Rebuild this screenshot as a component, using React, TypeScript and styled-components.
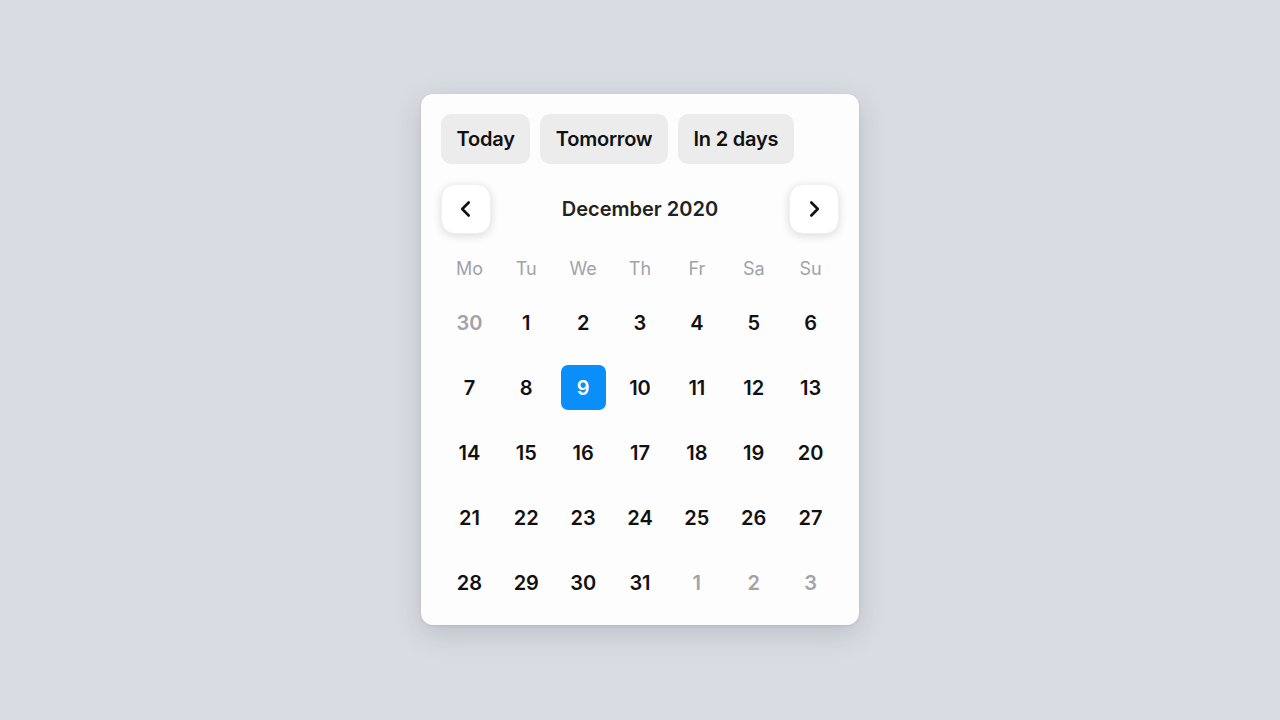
import React from "react";
import styled, { createGlobalStyle } from "styled-components";

const GlobalStyle = createGlobalStyle`
  html, body {
    margin: 0;
    padding: 0;
    background: #d9dce2;
    font-family: Inter, "Noto Sans", sans-serif;
  }
  * { box-sizing: border-box; }
`;

const Page = styled.div`
  width: 1280px;
  height: 720px;
  display: flex;
  justify-content: center;
  align-items: flex-start;
  padding-top: 94px;
`;

const Card = styled.div`
  width: 438px;
  background: #fdfdfd;
  border-radius: 12px;
  padding: 20px;
  box-shadow: 0 8px 28px rgba(60, 66, 80, 0.18), 0 1px 3px rgba(60, 66, 80, 0.12);
  display: flex;
  flex-direction: column;
`;

const Presets = styled.div`
  display: flex;
  gap: 10px;
`;

const PresetButton = styled.button`
  height: 50px;
  padding: 0 15.5px;
  border: none;
  border-radius: 10px;
  background: #ececed;
  color: #111;
  font-family: Inter, sans-serif;
  font-size: 20px;
  font-weight: 600;
  letter-spacing: -0.2px;
  cursor: pointer;
`;

const NavRow = styled.div`
  margin-top: 20px;
  display: flex;
  align-items: center;
  justify-content: space-between;
`;

const NavButton = styled.button`
  width: 50px;
  height: 50px;
  border-radius: 14px;
  border: 1px solid #eef0f2;
  background: #fff;
  box-shadow: 0 2px 8px rgba(0, 0, 0, 0.14);
  display: flex;
  align-items: center;
  justify-content: center;
  color: #111;
  padding: 0;
  cursor: pointer;
`;

const MonthTitle = styled.div`
  font-size: 20px;
  font-weight: 600;
  color: #222;
`;

const Weekdays = styled.div`
  margin-top: 22px;
  height: 24px;
  display: grid;
  grid-template-columns: repeat(7, 1fr);
`;

const Weekday = styled.div`
  display: flex;
  align-items: center;
  justify-content: center;
  font-size: 18px;
  color: #a0a3a8;
`;

const Days = styled.div`
  margin-top: 20px;
  display: grid;
  grid-template-columns: repeat(7, 1fr);
  row-gap: 20px;
`;

const DayCell = styled.div`
  display: flex;
  justify-content: center;
`;

const Day = styled.div<{ $muted?: boolean; $selected?: boolean }>`
  width: 45px;
  height: 45px;
  border-radius: 7px;
  display: flex;
  align-items: center;
  justify-content: center;
  font-size: 20px;
  font-weight: 600;
  color: ${(p) => (p.$selected ? "#fff" : p.$muted ? "#a0a3a8" : "#111")};
  background: ${(p) => (p.$selected ? "#0a8ef9" : "transparent")};
`;

const Chevron = ({ dir }: { dir: "left" | "right" }) => (
  <svg width="26" height="26" viewBox="0 0 24 24" fill="none" stroke="currentColor" strokeWidth="2.4" strokeLinecap="round" strokeLinejoin="round">
    {dir === "left" ? <path d="m14.5 18-6-6 6-6" /> : <path d="m9.5 18 6-6-6-6" />}
  </svg>
);

const weekdays = ["Mo", "Tu", "We", "Th", "Fr", "Sa", "Su"];

type Cell = { n: number; muted?: boolean };
const cells: Cell[] = [
  { n: 30, muted: true },
  ...Array.from({ length: 31 }, (_, i) => ({ n: i + 1 })),
  { n: 1, muted: true },
  { n: 2, muted: true },
  { n: 3, muted: true },
];

export default function App() {
  return (
    <>
      <GlobalStyle />
      <Page>
        <Card>
          <Presets>
            <PresetButton>Today</PresetButton>
            <PresetButton>Tomorrow</PresetButton>
            <PresetButton>In 2 days</PresetButton>
          </Presets>
          <NavRow>
            <NavButton aria-label="Previous month">
              <Chevron dir="left" />
            </NavButton>
            <MonthTitle>December 2020</MonthTitle>
            <NavButton aria-label="Next month">
              <Chevron dir="right" />
            </NavButton>
          </NavRow>
          <Weekdays>
            {weekdays.map((w) => (
              <Weekday key={w}>{w}</Weekday>
            ))}
          </Weekdays>
          <Days>
            {cells.map((c, i) => (
              <DayCell key={i}>
                <Day $muted={c.muted} $selected={!c.muted && c.n === 9}>
                  {c.n}
                </Day>
              </DayCell>
            ))}
          </Days>
        </Card>
      </Page>
    </>
  );
}
